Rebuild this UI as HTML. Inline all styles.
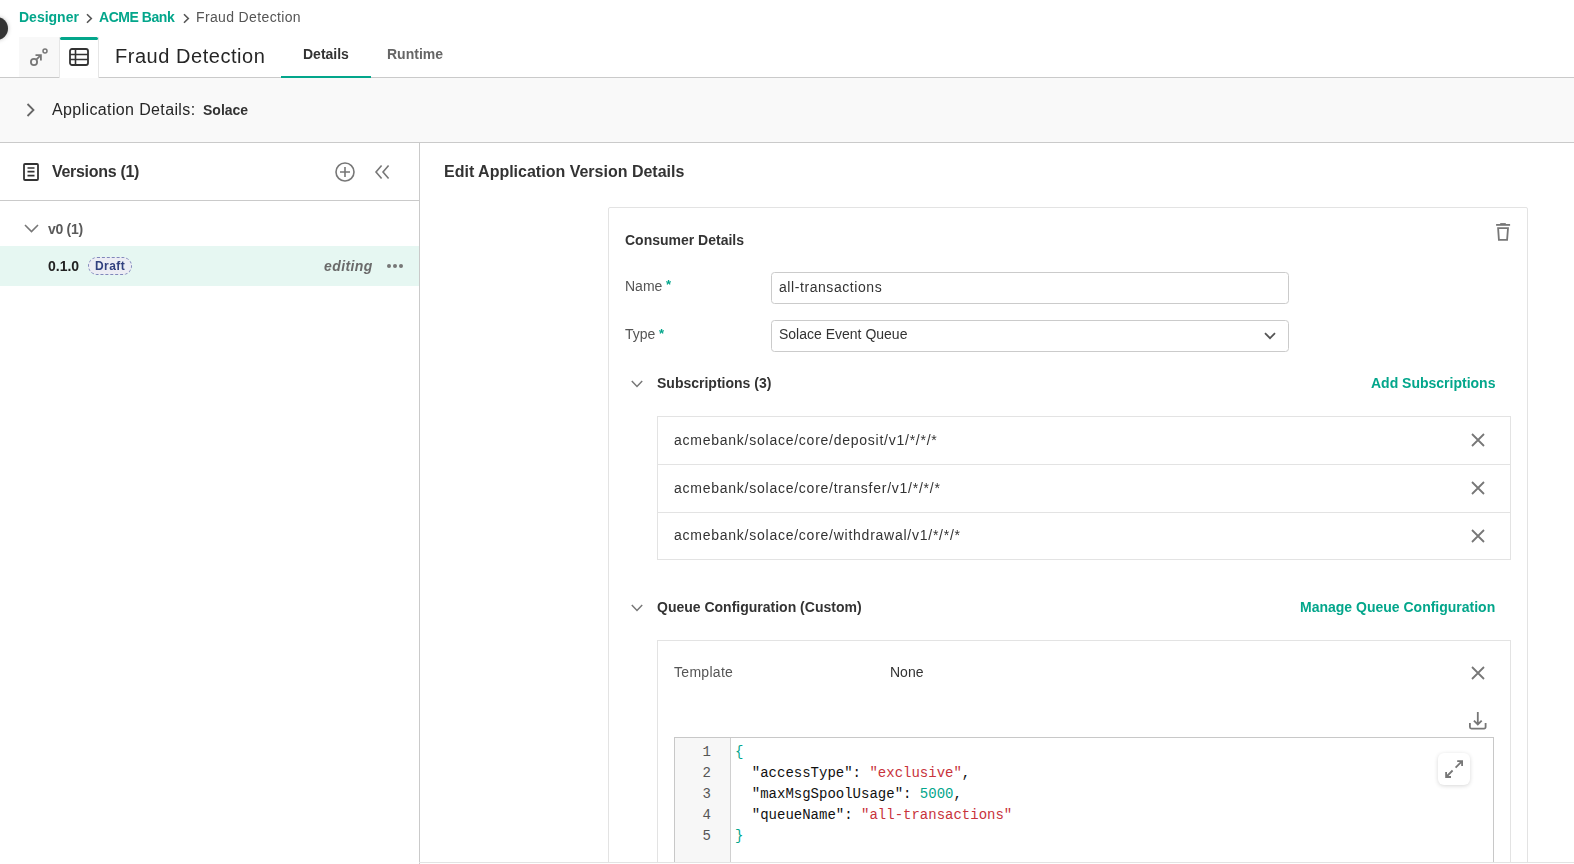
<!DOCTYPE html>
<html><head><meta charset="utf-8">
<style>
html,body{margin:0;padding:0;width:1574px;height:864px;overflow:hidden;background:#fff;}
body{position:relative;font-family:"Liberation Sans",sans-serif;color:#333;}
.a{position:absolute;}
.t{position:absolute;white-space:nowrap;line-height:1;will-change:transform;}
.b{font-weight:bold;}
.teal{color:#03a68b;}
svg{position:absolute;overflow:visible;}
.code{font-family:"Liberation Mono",monospace;font-size:14px;line-height:21px;white-space:pre;}
</style></head>
<body>
<!-- dark circle -->
<div class="a" style="left:-15px;top:17px;width:23px;height:23px;border-radius:50%;background:#333;box-shadow:0 0 4px rgba(0,0,0,.25);"></div>

<!-- breadcrumb -->
<div class="t b teal" style="left:19px;top:10px;font-size:14px;">Designer</div>
<svg style="left:86px;top:12.5px" width="7" height="11" viewBox="0 0 7 11"><path d="M1 1.2l4.3 4.3L1 9.8" fill="none" stroke="#555" stroke-width="1.6"/></svg>
<div class="t b teal" style="left:99px;top:10px;font-size:14px;letter-spacing:-0.45px;">ACME Bank</div>
<svg style="left:183px;top:12.5px" width="7" height="11" viewBox="0 0 7 11"><path d="M1 1.2l4.3 4.3L1 9.8" fill="none" stroke="#555" stroke-width="1.6"/></svg>
<div class="t" style="left:196px;top:10px;font-size:14px;color:#555;letter-spacing:0.36px;">Fraud Detection</div>

<!-- tab bar -->
<div class="a" style="left:0;top:77px;width:1574px;height:1px;background:#cacaca;"></div>
<div class="a" style="left:19px;top:37px;width:40px;height:40px;background:#f8f8f8;"></div>
<svg style="left:19px;top:37px" width="40" height="40" viewBox="0 0 40 40">
  <circle cx="34" cy="62" r="0" fill="none"/>
  <circle cx="15" cy="25" r="3.1" fill="none" stroke="#777" stroke-width="1.8"/>
  <path d="M17.3 22.7L21.6 18.4M16.5 18.1h5.4v5.4" fill="none" stroke="#777" stroke-width="1.8"/>
  <circle cx="26" cy="14" r="2" fill="none" stroke="#777" stroke-width="1.5"/>
</svg>
<div class="a" style="left:59px;top:37px;width:40px;height:41px;background:#fff;border-left:1px solid #e6e6e6;border-right:1px solid #e6e6e6;box-sizing:border-box;"></div>
<div class="a" style="left:60px;top:37px;width:38px;height:3px;background:#03a68b;border-radius:2px;"></div>
<svg style="left:69px;top:48px" width="20" height="18" viewBox="0 0 20 18">
  <rect x="1" y="1" width="18" height="16" rx="2" fill="none" stroke="#333" stroke-width="1.8"/>
  <path d="M1 6.5h18M1 11.5h18M6.5 1v16" fill="none" stroke="#333" stroke-width="1.6"/>
</svg>
<div class="t" style="left:115px;top:46px;font-size:20px;color:#262626;letter-spacing:0.54px;">Fraud Detection</div>
<div class="t b" style="left:303px;top:47px;font-size:14px;color:#333;">Details</div>
<div class="a" style="left:281px;top:76px;width:90px;height:2px;background:#03a68b;"></div>
<div class="t b" style="left:387px;top:47px;font-size:14px;color:#666;">Runtime</div>

<!-- application details bar -->
<div class="a" style="left:0;top:78px;width:1574px;height:64px;background:#f9f9f9;"></div>
<div class="a" style="left:0;top:142px;width:1574px;height:1px;background:#cacaca;"></div>
<svg style="left:26px;top:103px" width="9" height="14" viewBox="0 0 9 14"><path d="M1.5 1l6 6-6 6" fill="none" stroke="#666" stroke-width="1.8"/></svg>
<div class="t" style="left:52px;top:101.5px;font-size:16px;color:#262626;letter-spacing:0.37px;">Application Details:</div>
<div class="t b" style="left:203px;top:103.3px;font-size:14px;color:#333;">Solace</div>

<!-- left panel -->
<div class="a" style="left:419px;top:143px;width:1px;height:721px;background:#cacaca;"></div>
<svg style="left:23px;top:163px" width="16" height="18" viewBox="0 0 16 18">
  <rect x="1" y="1" width="14" height="16" rx="1" fill="none" stroke="#333" stroke-width="1.8"/>
  <path d="M4.5 5h7M4.5 8.6h7M4.5 12.6h7" fill="none" stroke="#333" stroke-width="1.6"/>
</svg>
<div class="t b" style="left:52px;top:163.5px;font-size:16px;color:#333;letter-spacing:-0.3px;">Versions (1)</div>
<svg style="left:335px;top:162px" width="20" height="20" viewBox="0 0 20 20">
  <circle cx="10" cy="10" r="9" fill="none" stroke="#777" stroke-width="1.6"/>
  <path d="M5 10h10M10 5v10" fill="none" stroke="#777" stroke-width="1.6"/>
</svg>
<svg style="left:375px;top:165px" width="15" height="14" viewBox="0 0 15 14">
  <path d="M6.6 0.4L1 7l5.6 6.6M13.6 0.4L8 7l5.6 6.6" fill="none" stroke="#777" stroke-width="1.6"/>
</svg>
<div class="a" style="left:0;top:200px;width:419px;height:1px;background:#cacaca;"></div>
<svg style="left:24px;top:224px" width="15" height="9" viewBox="0 0 15 9"><path d="M1 1l6.5 6.5L14 1" fill="none" stroke="#777" stroke-width="1.6"/></svg>
<div class="t b" style="left:48px;top:222px;font-size:14px;color:#5a5a5a;letter-spacing:-0.3px;">v0 (1)</div>
<div class="a" style="left:0;top:246px;width:419px;height:40px;background:#e6f7f2;"></div>
<div class="t b" style="left:48px;top:259px;font-size:14px;color:#222;">0.1.0</div>
<div class="a" style="left:88px;top:257px;width:44px;height:18px;box-sizing:border-box;border:1px dashed #8088bb;border-radius:9px;background:#ecedf4;"></div>
<div class="t b" style="left:95px;top:259.7px;font-size:12px;color:#32407f;letter-spacing:0.45px;">Draft</div>
<div class="t b" style="left:324px;top:259px;font-size:14px;font-style:italic;color:#6a6a6a;letter-spacing:0.4px;">editing</div>
<div class="a" style="left:386.9px;top:263.8px;width:4.2px;height:4.2px;border-radius:50%;background:#777;"></div>
<div class="a" style="left:392.9px;top:263.8px;width:4.2px;height:4.2px;border-radius:50%;background:#777;"></div>
<div class="a" style="left:398.9px;top:263.8px;width:4.2px;height:4.2px;border-radius:50%;background:#777;"></div>

<!-- right panel -->
<div class="t b" style="left:444px;top:164.4px;font-size:16px;color:#333;">Edit Application Version Details</div>
<div class="a" style="left:608px;top:207px;width:920px;height:700px;box-sizing:border-box;border:1px solid #e3e3e3;border-radius:2px;"></div>
<div class="t b" style="left:625px;top:233px;font-size:14px;color:#333;">Consumer Details</div>


<!-- trash icon -->
<svg style="left:1496px;top:222px" width="15" height="20" viewBox="0 0 15 20">
  <path d="M0.1 2.9h14" fill="none" stroke="#777" stroke-width="1.8"/>
  <path d="M4.2 1.8h5.6" fill="none" stroke="#777" stroke-width="1.4"/>
  <path d="M2.1 6.1h9.9l-0.9 11.7H2.9z" fill="none" stroke="#777" stroke-width="1.8" stroke-linejoin="miter"/>
</svg>
<!-- name/type -->
<div class="t" style="left:625px;top:278.5px;font-size:14px;color:#555;">Name</div>
<div class="t teal b" style="left:665.5px;top:278px;font-size:13px;">*</div>
<div class="a" style="left:771px;top:272px;width:518px;height:32px;box-sizing:border-box;border:1px solid #cbcbcb;border-radius:3.5px;"></div>
<div class="t" style="left:779px;top:280.3px;font-size:14px;color:#333;letter-spacing:0.57px;">all-transactions</div>
<div class="t" style="left:625px;top:327.4px;font-size:14px;color:#555;">Type</div>
<div class="t teal b" style="left:659px;top:326.5px;font-size:13px;">*</div>
<div class="a" style="left:771px;top:320px;width:518px;height:32px;box-sizing:border-box;border:1px solid #cbcbcb;border-radius:3.5px;"></div>
<div class="t" style="left:779px;top:327.4px;font-size:14px;color:#333;">Solace Event Queue</div>
<svg style="left:1264px;top:332px" width="12" height="8" viewBox="0 0 12 8"><path d="M1 1.2l5 5 5-5" fill="none" stroke="#555" stroke-width="1.8"/></svg>

<!-- subscriptions -->
<svg style="left:631px;top:380px" width="12" height="8" viewBox="0 0 12 8"><path d="M0.8 1l5.2 5.5L11.2 1" fill="none" stroke="#777" stroke-width="1.5"/></svg>
<div class="t b" style="left:657px;top:375.6px;font-size:14px;color:#333;">Subscriptions (3)</div>
<div class="t b teal" style="left:1371px;top:376.4px;font-size:14px;">Add Subscriptions</div>
<div class="a" style="left:657px;top:416px;width:854px;height:144px;box-sizing:border-box;border:1px solid #e3e3e3;"></div>
<div class="a" style="left:658px;top:464px;width:852px;height:1px;background:#e3e3e3;"></div>
<div class="a" style="left:658px;top:512px;width:852px;height:1px;background:#e3e3e3;"></div>
<div class="t" style="left:674px;top:433.2px;font-size:14px;color:#333;letter-spacing:0.75px;">acmebank/solace/core/deposit/v1/*/*/*</div>
<div class="t" style="left:674px;top:481.2px;font-size:14px;color:#333;letter-spacing:0.75px;">acmebank/solace/core/transfer/v1/*/*/*</div>
<div class="t" style="left:674px;top:528.4px;font-size:14px;color:#333;letter-spacing:0.75px;">acmebank/solace/core/withdrawal/v1/*/*/*</div>
<svg style="left:1471px;top:433px" width="14" height="14" viewBox="0 0 14 14"><path d="M1 1l12 12M13 1L1 13" fill="none" stroke="#777" stroke-width="1.8"/></svg>
<svg style="left:1471px;top:481px" width="14" height="14" viewBox="0 0 14 14"><path d="M1 1l12 12M13 1L1 13" fill="none" stroke="#777" stroke-width="1.8"/></svg>
<svg style="left:1471px;top:528.5px" width="14" height="14" viewBox="0 0 14 14"><path d="M1 1l12 12M13 1L1 13" fill="none" stroke="#777" stroke-width="1.8"/></svg>

<!-- queue config -->
<svg style="left:631px;top:604px" width="12" height="8" viewBox="0 0 12 8"><path d="M0.8 1l5.2 5.5L11.2 1" fill="none" stroke="#777" stroke-width="1.5"/></svg>
<div class="t b" style="left:657px;top:600.2px;font-size:14px;color:#333;">Queue Configuration (Custom)</div>
<div class="t b teal" style="left:1300px;top:600.4px;font-size:14px;">Manage Queue Configuration</div>
<div class="a" style="left:657px;top:640px;width:854px;height:300px;box-sizing:border-box;border:1px solid #e3e3e3;"></div>
<div class="t" style="left:674px;top:665.4px;font-size:14px;color:#555;letter-spacing:0.3px;">Template</div>
<div class="t" style="left:890px;top:665.4px;font-size:14px;color:#333;">None</div>
<svg style="left:1471px;top:665.5px" width="14" height="14" viewBox="0 0 14 14"><path d="M1 1l12 12M13 1L1 13" fill="none" stroke="#777" stroke-width="1.8"/></svg>
<svg style="left:1469px;top:711px" width="19" height="20" viewBox="0 0 19 20">
  <path d="M8.8 1.1V13.6M4.9 9.6l3.9 3.9 3.9-3.9M0.9 12v4.1a1.5 1.5 0 0 0 1.5 1.5h12.7a1.5 1.5 0 0 0 1.5-1.5V12" fill="none" stroke="#777" stroke-width="1.8"/>
</svg>
<!-- code editor -->
<div class="a" style="left:674px;top:737px;width:820px;height:200px;box-sizing:border-box;border:1px solid #c8c8c8;background:#fff;"></div>
<div class="a" style="left:675px;top:738px;width:55px;height:200px;background:#f7f7f7;border-right:1px solid #d0d0d0;"></div>
<div class="a code" style="left:675px;top:742px;width:36px;text-align:right;color:#555;">1
2
3
4
5</div>
<div class="a code" style="left:735px;top:742px;color:#111;"><span style="color:#03a68b">{</span>
  "accessType": <span style="color:#c8333c">"exclusive"</span>,
  "maxMsgSpoolUsage": <span style="color:#03a68b">5000</span>,
  "queueName": <span style="color:#c8333c">"all-transactions"</span>
<span style="color:#03a68b">}</span></div>
<div class="a" style="left:1438px;top:753px;width:32px;height:32px;border-radius:6px;background:#fff;box-shadow:0 1px 4px rgba(0,0,0,.16);"></div>
<svg style="left:1445px;top:759px" width="19" height="19" viewBox="0 0 19 19">
  <path d="M12.2 2.1H17.1V7M17.1 2.1L10.6 8.6M1.1 12.9V18H6M1.1 18L7.6 11.5" fill="none" stroke="#777" stroke-width="1.8"/>
</svg>
<!-- bottom line -->
<div class="a" style="left:419px;top:862px;width:1155px;height:1px;background:#e3e3e3;"></div>
<div class="a" style="left:420px;top:863px;width:1154px;height:1px;background:#fff;"></div>
</body></html>
